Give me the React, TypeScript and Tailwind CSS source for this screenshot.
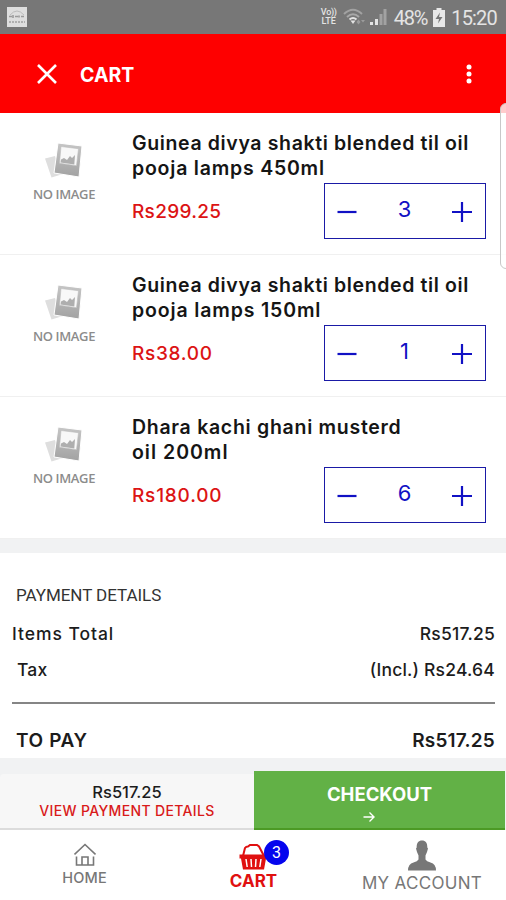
import React from "react";

type Item = { title: string[]; price: string; qty: number; titleTracking: string[]; priceTracking: string };

const items: Item[] = [
  {
    title: ["Guinea divya shakti blended til oil", "pooja lamps 450ml"],
    price: "Rs299.25",
    qty: 3,
    titleTracking: ["tracking-[0.63px]", "tracking-[0.78px]"],
    priceTracking: "tracking-[0.3px]",
  },
  {
    title: ["Guinea divya shakti blended til oil", "pooja lamps 150ml"],
    price: "Rs38.00",
    qty: 1,
    titleTracking: ["tracking-[0.63px]", "tracking-[0.85px]"],
    priceTracking: "tracking-[0.7px]",
  },
  {
    title: ["Dhara kachi ghani musterd", "oil 200ml"],
    price: "Rs180.00",
    qty: 6,
    titleTracking: ["tracking-[0.71px]", "tracking-[1px]"],
    priceTracking: "tracking-[0.8px]",
  },
];

function StatusBar() {
  return (
    <div className="flex h-[34px] items-center bg-[#777777] pl-[7px] pr-[9px] text-[#e4e4e4]">
      <svg width="20" height="20" viewBox="0 0 20 20" className="-mt-px">
        <rect width="20" height="20" fill="#dedede" />
        <path d="M3 8Q10 0 17 8" fill="none" stroke="#bcbcbc" />
        <path d="M2 9.500h3M6 8v3M8 9.500h3M12 8.500v2M14 9.500h3" stroke="#9a9a9a" strokeWidth="1.600" />
        <path d="M2 15h16" stroke="#b0b0b0" strokeWidth="2" strokeDasharray="2 1" />
      </svg>
      <div className="ml-auto flex flex-col items-center font-['Roboto',sans-serif] text-[9px] font-medium leading-none">
        <span className="h-[9px] leading-[9px] tracking-[-0.3px]">Vo))</span>
        <span className="h-[9px] leading-[9px] tracking-[0.1px]">LTE</span>
      </div>
      <svg width="24" height="18" viewBox="0 0 24 18" className="ml-[6px]">
        <g fill="none" strokeWidth="2">
          <path d="M1 6Q10 -2.500 19 6" stroke="#a2a2a2" />
          <path d="M4 9Q10 3.500 16 9" stroke="#a8a8a8" />
          <path d="M6.500 11.500Q10 8.500 13.500 11.500" stroke="#e4e4e4" />
        </g>
        <path d="M7.500 12.500h5L10 16z" fill="#e4e4e4" />
        <path d="M13.500 14l2-2.500 2 2.500-2 2.500zM18 12h4l-2 2.500z" fill="#9c9c9c" />
      </svg>
      <svg width="18" height="18" viewBox="0 0 18 18" className="ml-[2px]">
        <path d="M1 17v-3h3v3zM6 17v-6h3v6z" fill="#e4e4e4" />
        <path d="M10.500 17V6h3v11zM14.500 17V1h3v16z" fill="#a2a2a2" />
      </svg>
      <span className="ml-[7px] mt-px font-['Roboto',sans-serif] text-[20px] leading-none tracking-[-1.2px]">48%</span>
      <svg width="14" height="19" viewBox="0 0 14 19" className="ml-[5px]">
        <path d="M4.500 0h5v2H13v17H1V2h3.500z" fill="#e8e8e8" />
        <path d="M8 4.500L3.500 11H7l-1 4.500L10.500 9H7z" fill="#777" />
      </svg>
      <span className="ml-[5px] mt-px font-['Roboto',sans-serif] text-[20px] leading-none tracking-[-0.8px]">15:20</span>
    </div>
  );
}

function Header() {
  return (
    <div className="flex h-[79px] items-center bg-[#fe0000] pl-[37px] pr-[34px] text-white">
      <svg width="20" height="20" viewBox="0 0 20 20" className="mt-px">
        <path d="M1 1l18 18M19 1L1 19" stroke="white" strokeWidth="2.600" />
      </svg>
      <span className="ml-[23px] mt-[4px] text-[19.500px] font-bold leading-none">CART</span>
      <svg width="6" height="20" viewBox="0 0 6 20" className="ml-auto mt-px" fill="white">
        <circle cx="3" cy="3" r="2.500" />
        <circle cx="3" cy="10" r="2.500" />
        <circle cx="3" cy="17" r="2.500" />
      </svg>
    </div>
  );
}

function NoImage() {
  return (
    <div className="flex w-[128px] flex-col items-center pt-[29px]">
      <svg width="38" height="37" viewBox="0 0 38 37">
        <defs>
          <linearGradient id="frame" x1="0" y1="0" x2="0" y2="1">
            <stop offset="0" stopColor="#c6c6c6" />
            <stop offset="1" stopColor="#a2a2a2" />
          </linearGradient>
        </defs>
        <path d="M0 16.500l10-2.500 8 18-11.500 3.500z" fill="#dedede" />
        <path d="M13 1l24 3-3 31-25-4z" fill="url(#frame)" stroke="white" />
        <path d="M16 4.500l17.500 2.200-2 17-17-2.500z" fill="#f8f8f8" stroke="#bcbcbc" strokeWidth="0.600" />
        <path d="M15.500 20.500l0.500-3 3-1.500 3 2 3-4 2 2 3-3-0.700 9.500z" fill="#aeaeae" />
      </svg>
      <span className="mt-[5px] font-['Open_Sans',sans-serif] text-[13px] font-semibold leading-[20px] tracking-[-0.35px] text-[#8c8c8c]">
        NO IMAGE
      </span>
    </div>
  );
}

function Stepper({ qty }: { qty: number }) {
  return (
    <div className="-mt-[5px] ml-auto flex h-[56px] w-[162px] items-center justify-between border border-[#1a1aa6] pl-[12px] pr-[13px] pt-px text-[#1111c4]">
      <svg width="20" height="20" viewBox="0 0 20 20">
        <path d="M0.500 10h19" stroke="currentColor" strokeWidth="2.200" />
      </svg>
      <span className="-mt-[5px] text-[22px] leading-none">{qty}</span>
      <svg width="20" height="20" viewBox="0 0 20 20">
        <path d="M0 10h20M10 0v20" stroke="currentColor" strokeWidth="2.200" />
      </svg>
    </div>
  );
}

function CartRow({ item }: { item: Item }) {
  return (
    <div className="flex h-[142px] border-b border-[#f0f0f0]">
      <NoImage />
      <div className="flex flex-1 flex-col pl-[4px] pr-[20px] pt-[18px]">
        {item.title.map((line, i) => (
          <span
            key={line}
            className={`whitespace-nowrap text-[19.500px] font-semibold leading-[24.500px] text-[#151515] ${item.titleTracking[i]}`}
          >
            {line}
          </span>
        ))}
        <div className="mt-[8px] flex items-start">
          <span className={`mt-[12px] text-[19px] font-medium leading-[24px] text-[#dc1414] ${item.priceTracking}`}>
            {item.price}
          </span>
          <Stepper qty={item.qty} />
        </div>
      </div>
    </div>
  );
}

function PaymentDetails() {
  return (
    <div className="h-[205px] bg-white pl-[12px] pr-[11px] pt-[32px] text-[#1c1c1c]">
      <div className="pl-[4px] font-['Roboto',sans-serif] text-[17px] leading-[20px] tracking-[-0.05px] text-[#333]">
        PAYMENT DETAILS
      </div>
      <div className="mt-[18px] flex justify-between text-[17.500px] font-medium leading-[22px]">
        <span className="tracking-[0.95px]">Items Total</span>
        <span className="tracking-[0.2px]">Rs517.25</span>
      </div>
      <div className="mt-[14px] flex justify-between text-[17.500px] font-medium leading-[22px]">
        <span className="pl-[5px] tracking-[0.2px]">Tax</span>
        <span className="tracking-[0.2px]">(Incl.) Rs24.64</span>
      </div>
      <div className="mt-[21px] h-[1.500px] bg-[#858585]" />
      <div className="mt-[25px] flex justify-between text-[19px] font-semibold leading-[24px]">
        <span className="pl-[4px] tracking-[0.6px]">TO PAY</span>
        <span className="tracking-[0.2px]">Rs517.25</span>
      </div>
    </div>
  );
}

function CheckoutBar() {
  return (
    <div className="flex h-[59px] pr-px">
      <div className="mt-[3px] flex w-[254px] flex-col items-center rounded-tl border-b-2 border-[#dcdcdc] bg-[#f7f7f7] pt-[9px]">
        <span className="text-[16.500px] font-medium leading-[19px] text-[#1c1c1c]">Rs517.25</span>
        <span className="text-[14px] font-medium leading-[17px] tracking-[0.35px] text-[#d91a1a]">
          VIEW PAYMENT DETAILS
        </span>
      </div>
      <div className="flex flex-1 flex-col items-center border-b-2 border-[#4c9a25] bg-[#62b146] pt-[11px] text-white">
        <span className="text-[18.500px] font-bold leading-[24px]">CHECKOUT</span>
        <svg width="12" height="12" viewBox="0 0 12 12" className="mr-[22px] mt-[5px]">
          <path d="M0.500 6h10.500M6.500 1.500L11 6l-4.500 4.500" fill="none" stroke="white" strokeWidth="1.400" />
        </svg>
      </div>
    </div>
  );
}

function BottomNav() {
  return (
    <div className="flex h-[70px] bg-white text-[#777]">
      <div className="flex w-[169px] flex-col items-center pt-[13px]">
        <svg width="22" height="24" viewBox="0 0 22 24" fill="none" stroke="#777" strokeWidth="1.600">
          <path d="M0.500 11.500L11 1.500 21.500 11.500M2.500 13.500v8.500H19.500V13.500M8 22V14h6v8" />
        </svg>
        <span className="mt-[2px] text-[14.500px] font-medium leading-[18px] tracking-[0.2px]">HOME</span>
      </div>
      <div className="flex w-[169px] flex-col items-center pt-[14px] text-[#e01010]">
        <div className="relative">
          <svg width="29" height="26" viewBox="0 0 29 26">
            <path d="M4 12L6 4Q7 2.500 9 2.500L11 1h7l2 1.500 5 9.500" fill="none" stroke="currentColor" strokeWidth="2" />
            <path d="M0.500 10.500h28v4H27L25 25.500H4L2 14.500H0.500z" fill="currentColor" />
            <path d="M7 15l1.200 8M12 15l0.500 8M17 15l-0.500 8M22 15l-1.200 8" stroke="white" strokeWidth="1.500" />
          </svg>
          <span className="absolute -top-[4px] left-[25px] flex h-[25px] w-[25px] items-center justify-center rounded-full bg-[#0505ee] font-['Roboto',sans-serif] text-[16px] leading-none text-white">
            3
          </span>
        </div>
        <span className="-mt-px text-[17px] font-bold leading-[24px]">CART</span>
      </div>
      <div className="flex w-[168px] flex-col items-center pt-[10px]">
        <svg width="30" height="31" viewBox="0 0 30 31" fill="#777">
          <path d="M15 0.500C18.500 0.500 20.500 3 20.300 7.500L21 8.500 20 12 18.500 15.500V19.500Q19.500 21.500 23.500 22.500 29 24 29 30.500H1Q1 24 6.500 22.500 10.500 21.500 11.500 19.500V15.500L10 12 9 8.500 9.700 7.500C9.500 3 11.500 0.500 15 0.500z" />
        </svg>
        <span className="mt-px text-[17px] leading-[22px] tracking-[0.3px]">MY ACCOUNT</span>
      </div>
    </div>
  );
}

export default function App() {
  return (
    <div className="relative flex h-[900px] w-[506px] flex-col overflow-hidden bg-white font-['Inter',sans-serif]">
      <StatusBar />
      <Header />
      <div>
        {items.map((item) => (
          <CartRow key={item.title.join(" ")} item={item} />
        ))}
      </div>
      <div className="h-[14px] bg-[#f1f2f3]" />
      <PaymentDetails />
      <div className="bg-[#f1f2f3] pt-[13px]">
        <CheckoutBar />
      </div>
      <BottomNav />
      <div className="absolute left-[500px] top-[103px] h-[166px] w-[12px] rounded-l-[6px] border border-[#c8c8c8] bg-white/80" />
    </div>
  );
}
